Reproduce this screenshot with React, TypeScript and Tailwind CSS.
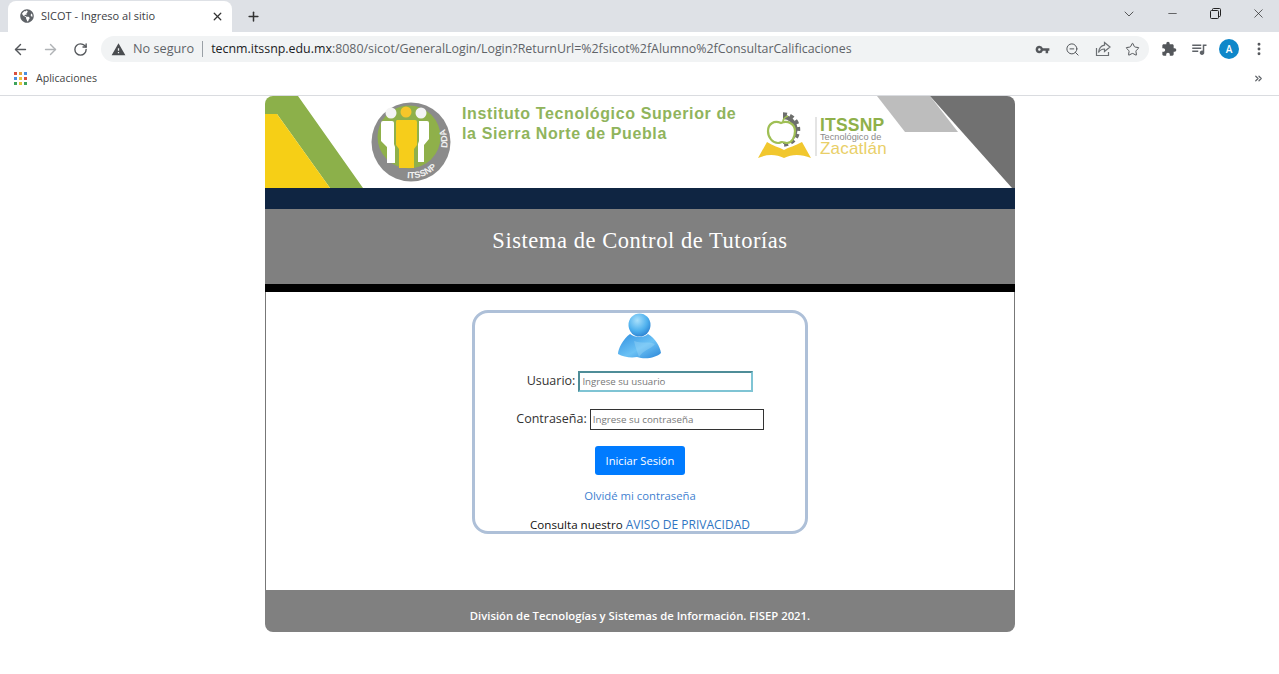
import React from 'react';
import { ArrowLeft, ArrowRight, RotateCw, ChevronDown, Minus, X, Plus, Star, ZoomOut, ChevronsRight, MoreVertical } from 'lucide-react';
import { FaGlobeAmericas } from 'react-icons/fa';
import { MdExtension, MdVpnKey, MdWarning, MdQueueMusic } from 'react-icons/md';

const uiFont = "font-['Open_Sans','Noto_Sans',sans-serif]";

const AppsGrid = () => {
  const colors = ['#d9503f', '#e8a33d', '#4a8fe0', '#4a8fe0', '#e8c33d', '#d9503f', '#3fa45b', '#e8c33d', '#3fa45b'];
  return (
    <div className="grid grid-cols-3 gap-[2px] w-[13px] h-[13px]">
      {colors.map((c, i) => (
        <span key={i} className="w-[3px] h-[3px]" style={{ backgroundColor: c }} />
      ))}
    </div>
  );
};

const ShareIcon = () => (
  <svg width="16" height="16" viewBox="0 0 16 16" fill="none" stroke="#6b6f73" strokeWidth="1.2">
    <path d="M1.5 7v7.5h12V11" />
    <path d="M9.5 1.5 15 6l-5.5 4.5V8C7 8 5 9 3.5 11.5 4 7.5 6 4.8 9.5 4.2z" />
  </svg>
);

const RestoreIcon = () => (
  <svg width="11" height="11" viewBox="0 0 11 11" fill="none" stroke="#222" strokeWidth="1">
    <rect x="0.5" y="2.5" width="8" height="8" rx="1" />
    <path d="M2.5 2.5v-1a1 1 0 0 1 1-1h6a1 1 0 0 1 1 1v6a1 1 0 0 1-1 1h-1" />
  </svg>
);

const BrowserChrome = () => (
  <div className={`${uiFont} text-[#3c4043]`}>
    {/* Tab strip */}
    <div className="h-8 bg-[#dee1e6] flex items-end pl-2">
      <div className="w-[224px] h-[31px] bg-white rounded-t-lg flex items-center pl-3 pr-[8px] pb-px">
        <FaGlobeAmericas size={14} className="text-[#5f6368]" />
        <span className="ml-[7px] flex-1 text-[11px] text-[#3c4043]">SICOT - Ingreso al sitio</span>
        <X size={13} strokeWidth={2.4} className="text-[#333]" />
      </div>
      <div className="h-[31px] flex items-center ml-[14px] pb-px">
        <Plus size={15} strokeWidth={2.4} className="text-[#333]" />
      </div>
      <div className="flex-1 h-8 flex items-center justify-end pb-[5px]">
        <ChevronDown size={16} strokeWidth={1.2} className="text-[#333] mr-[29px]" />
        <Minus size={13} strokeWidth={1.2} className="text-[#222] mr-[31px]" />
        <div className="mr-[30px]"><RestoreIcon /></div>
        <X size={15} strokeWidth={1.1} className="text-[#222] mr-[13px]" />
      </div>
    </div>

    {/* Toolbar */}
    <div className="h-8 bg-white flex items-center pl-[12px] pt-[2px]">
      <ArrowLeft size={17} strokeWidth={2} className="text-[#54575b]" />
      <ArrowRight size={17} strokeWidth={2} className="text-[#b0b3b6] ml-[13px]" />
      <RotateCw size={15} strokeWidth={2.2} className="text-[#54575b] ml-[14px]" />
      <div className="ml-[13px] w-[1048px] h-[26px] rounded-full bg-[#f1f3f4] flex items-center pl-[10px] pr-[9px]">
        <MdWarning size={15} className="text-[#4a4d50]" />
        <span className="ml-[7px] text-[12.7px] text-[#5f6368]">No seguro</span>
        <span className="ml-[8px] mr-[8px] w-px h-[16px] bg-[#9aa0a6]" />
        <span className="text-[12.4px] flex-1 whitespace-nowrap">
          <span className="text-[#202124]">tecnm.itssnp.edu.mx</span>
          <span className="text-[#5f6368]">:8080/sicot/GeneralLogin/Login?ReturnUrl=%2fsicot%2fAlumno%2fConsultarCalificaciones</span>
        </span>
        <MdVpnKey size={15} className="text-[#54575b]" />
        <ZoomOut size={15} strokeWidth={1.6} className="text-[#54575b] ml-[15px]" />
        <div className="ml-[15px]"><ShareIcon /></div>
        <Star size={15} strokeWidth={1.6} className="text-[#54575b] ml-[14px]" />
      </div>
      <MdExtension size={16} className="text-[#54575b] ml-[12px]" />
      <MdQueueMusic size={18} className="text-[#5f6368] ml-[13px]" />
      <div className="ml-[11px] w-5 h-5 rounded-full bg-[#0f87c9] text-white text-[10px] font-semibold flex items-center justify-center">A</div>
      <MoreVertical size={16} strokeWidth={2.4} className="text-[#54575b] ml-[12px]" />
    </div>

    {/* Bookmarks bar */}
    <div className="h-8 bg-white border-b border-[#dadce0] flex items-center pl-[14px] pr-[15px] pb-[2px]">
      <AppsGrid />
      <span className="ml-[9px] text-[10.6px] text-[#444] flex-1">Aplicaciones</span>
      <ChevronsRight size={11} strokeWidth={2.6} className="text-[#5f6368]" />
    </div>
  </div>
);

const BannerArt = () => (
  <svg viewBox="0 0 750 92" width="750" height="92" className="block">
    <defs>
      <path id="ringBottom" d="M142 82 A 36 36 0 0 0 181 55" />
      <path id="ringSide" d="M182 52 A 36 36 0 0 0 168 18" />
    </defs>
    <rect width="750" height="92" fill="#ffffff" />
    {/* corner stripes */}
    <polygon points="0,0 33,0 98,92 65,92 12,18 0,18" fill="#8cb04a" />
    <polygon points="0,18 12,18 65,92 0,92" fill="#f6cf16" />
    <polygon points="612,0 665,0 693,36 640,36" fill="#bdbdbd" />
    <polygon points="665,0 750,0 750,92 747,92" fill="#717171" />

    {/* ITSSNP seal */}
    <circle cx="146" cy="46" r="39.5" fill="#8b8b8b" />
    <circle cx="144" cy="41" r="31.5" fill="#8fb04a" />
    <circle cx="126" cy="17" r="5.5" fill="#f4f4f4" />
    <circle cx="141" cy="16" r="5.5" fill="#f6c62a" />
    <circle cx="156" cy="17" r="5.5" fill="#f4f4f4" />
    <path d="M118 25 q-2 0 -2 2 v18 l6 6 v16 h8 v-16 l-1 -3 v-21 q0 -2 -2 -2z" fill="#ffffff" />
    <path d="M132 24 h18 q2 0 2 2 v23 l-3 4 v19 h-15 v-19 l-3 -4 v-23 q0 -2 1 -2z" fill="#f6cd1b" />
    <path d="M154 25 h8 q2 0 2 2 v16 l-5 6 v17 h-6 v-18 l1 -3z" fill="#ffffff" />
    <text fontFamily="'Liberation Sans',sans-serif" fontWeight="700" fontSize="9" fill="#f1f1f1">
      <textPath href="#ringBottom">ITSSNP</textPath>
    </text>
    <text fontFamily="'Liberation Sans',sans-serif" fontWeight="700" fontSize="9" fill="#f1f1f1">
      <textPath href="#ringSide">DDA</textPath>
    </text>

    {/* institute name */}
    <text x="197" y="23" fontFamily="'Liberation Sans',sans-serif" fontWeight="700" fontSize="16" letterSpacing="0.62" fill="#90b45c">
      Instituto Tecnológico Superior de
    </text>
    <text x="197" y="43" fontFamily="'Liberation Sans',sans-serif" fontWeight="700" fontSize="16" letterSpacing="0.62" fill="#90b45c">
      la Sierra Norte de Puebla
    </text>

    {/* Zacatlan logo: gear, apple, open book */}
    <path d="M518 21 A 12.5 12.5 0 0 1 518 46" fill="none" stroke="#6d6f6c" strokeWidth="4" />
    <path d="M518 18 A 15.5 15.5 0 0 1 518 49" fill="none" stroke="#6d6f6c" strokeWidth="3.5" strokeDasharray="4 3.2" />
    <path d="M516 27 c-7 -3 -13 1 -13 8 c0 7 5 12 10 12 c2 0 3 -1 4 -1 c2 0 3 1 5 1 c5 0 8 -6 8 -12 c0 -7 -7 -11 -14 -8z" fill="#ffffff" stroke="#9fbf55" strokeWidth="2.2" />
    <path d="M518 26 c0 -3 2 -5 5 -6" fill="none" stroke="#9fbf55" strokeWidth="1.8" />
    <path d="M493 62 L502 46 C508 50 514 51 519 54 C524 51 530 50 537 46 L546 62 C536 58 527 58 519 62 C511 58 502 58 493 62z" fill="#f1c72e" />
    <line x1="551" y1="21" x2="551" y2="60" stroke="#c9c9c9" strokeWidth="1" />
    <text x="555" y="34.5" fontFamily="'Liberation Sans',sans-serif" fontWeight="700" fontSize="17.5" letterSpacing="0.2" fill="#8fb04a">ITSSNP</text>
    <text x="555" y="43.5" fontFamily="'Liberation Sans',sans-serif" fontSize="9.2" fill="#8a8a8a">Tecnológico de</text>
    <text x="555" y="58" fontFamily="'Liberation Sans',sans-serif" fontSize="17" letterSpacing="0.2" fill="#e9cf68">Zacatlán</text>
  </svg>
);

const UserGlyph = () => (
  <svg width="46" height="46" viewBox="0 0 46 46" className="shrink-0">
    <defs>
      <radialGradient id="headFill" cx="40%" cy="30%" r="75%">
        <stop offset="0%" stopColor="#a9e0fb" />
        <stop offset="60%" stopColor="#4fb1ee" />
        <stop offset="100%" stopColor="#2a7fd0" />
      </radialGradient>
      <linearGradient id="bodyFill" x1="0" y1="0" x2="1" y2="1">
        <stop offset="0%" stopColor="#2f8fe0" />
        <stop offset="55%" stopColor="#6cc2f5" />
        <stop offset="100%" stopColor="#2b86d8" />
      </linearGradient>
    </defs>
    <path d="M13 21 C6 26 1 36 1 41 C6 44 14 45 20 44 L24 45 C32 46 40 44 44 40 C43 33 38 25 31 21 C27 25 18 25 13 21z" fill="url(#bodyFill)" />
    <path d="M17 28 C24 31 33 28 38 31 C34 36 26 37 22 44 C20 38 18 33 17 28z" fill="#a7dcf8" opacity="0.35" />
    <ellipse cx="22.5" cy="12" rx="11" ry="11.5" fill="url(#headFill)" />
  </svg>
);

const LoginBox = () => (
  <div className="w-[336px] h-[224px] mt-[18px] border-[3px] border-[#aec0d8] rounded-[16px] flex flex-col items-center">
    <UserGlyph />
    <div className="mt-[12px] h-[21px] shrink-0 flex items-center gap-[3px]">
      <label className="text-[12.5px] text-[#333]">Usuario:</label>
      <input
        placeholder="Ingrese su usuario"
        className="w-[175px] h-[21px] border-2 border-[#7fc4d4] border-l-[#4f8d98] border-t-[#4f8d98] px-[2px] text-[9.7px] outline-none placeholder:text-[#777]"
      />
    </div>
    <div className="mt-[17px] h-[21px] shrink-0 flex items-center gap-[3px]">
      <label className="text-[12.5px] text-[#333]">Contraseña:</label>
      <input
        placeholder="Ingrese su contraseña"
        className="w-[174px] h-[21px] border border-[#333] px-[2px] text-[9.8px] outline-none placeholder:text-[#777]"
      />
    </div>
    <button className="mt-[16px] w-[90px] h-[29px] shrink-0 bg-[#007bff] rounded-[3px] text-white text-[11.2px] pt-px">Iniciar Sesión</button>
    <a className="mt-[12px] text-[11.3px] leading-[18px] text-[#3f7fd0]">Olvidé mi contraseña</a>
    <p className="mt-[13px] shrink-0 text-[11.6px] leading-[14px] text-[#111]">
      Consulta nuestro <a className="text-[12px] text-[#2f75c2]">AVISO DE PRIVACIDAD</a>
    </p>
  </div>
);

export default function App() {
  return (
    <div className={`${uiFont} w-[1279px] h-[674px] bg-white overflow-hidden`}>
      <BrowserChrome />
      <main className="w-[750px] ml-[265px] rounded-lg overflow-hidden">
        <BannerArt />
        <div className="h-[21px] bg-[#0f2542]" />
        <div className="h-[75px] bg-[#808080] flex items-center justify-center pb-[11px]">
          <h1 className="text-[22.5px] text-white font-['Liberation_Serif',serif] tracking-[0.55px] font-normal">
            Sistema de Control de Tutorías
          </h1>
        </div>
        <div className="h-2 bg-black" />
        <div className="h-[298px] border-x border-[#777] flex justify-center">
          <LoginBox />
        </div>
        <footer className="h-[42px] bg-[#808080] flex items-end justify-center pb-[7px]">
          <span className="text-[11.3px] font-semibold text-white">División de Tecnologías y Sistemas de Información. FISEP 2021.</span>
        </footer>
      </main>
    </div>
  );
}
